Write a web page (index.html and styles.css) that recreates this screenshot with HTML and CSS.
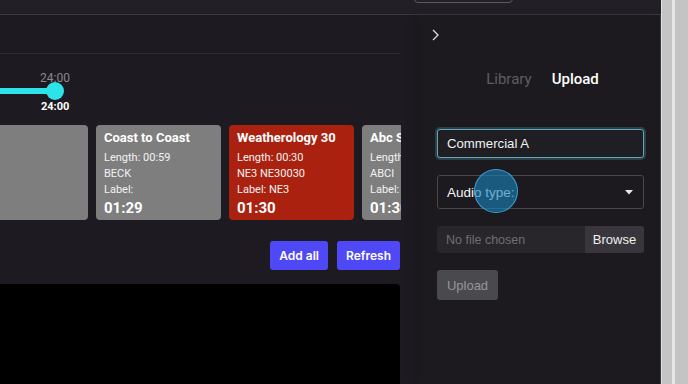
FILE: index.html
```html
<!DOCTYPE html>
<html>
<head>
<meta charset="utf-8">
<link rel="stylesheet" href="styles.css">
</head>
<body>
<div class="app">
  <div class="frame">
    <div class="topbar"><div class="top-btn"></div></div>
    <div class="row">
      <div class="main">
        <div class="content">
          <div class="header"></div>
          <div class="slider-area">
            <div class="slider">
              <span class="lbl-top">24:00</span>
              <div class="track"></div>
              <div class="knob"></div>
              <span class="lbl-bot">24:00</span>
            </div>
          </div>
          <div class="cards-view">
            <div class="cards">
              <div class="card gray"><div class="title">&nbsp;</div></div>
              <div class="card gray">
                <div class="title">Coast to Coast</div>
                <div class="line first">Length: 00:59</div>
                <div class="line">BECK</div>
                <div class="line">Label:</div>
                <div class="time">01:29</div>
              </div>
              <div class="card red">
                <div class="title">Weatherology 30</div>
                <div class="line first">Length: 00:30</div>
                <div class="line">NE3 NE30030</div>
                <div class="line">Label: NE3</div>
                <div class="time">01:30</div>
              </div>
              <div class="card gray">
                <div class="title">Abc Sports</div>
                <div class="line first">Length: 00:30</div>
                <div class="line">ABCI</div>
                <div class="line">Label:</div>
                <div class="time">01:30</div>
              </div>
            </div>
          </div>
          <div class="actions">
            <button class="btn-primary">Add all</button>
            <button class="btn-primary">Refresh</button>
          </div>
          <div class="player"></div>
        </div>
      </div>
      <div class="side">
        <div class="chev">
          <svg width="9" height="12" viewBox="0 0 9 12"><path d="M2 1 L7 6 L2 11" fill="none" stroke="#d8d8dc" stroke-width="1.4"/></svg>
        </div>
        <div class="tabs">
          <span class="tab">Library</span>
          <span class="tab active">Upload</span>
        </div>
        <div class="form">
          <div class="input">Commercial A</div>
          <div class="select">
            <span>Audio type:</span>
            <svg width="8" height="5" viewBox="0 0 8 5"><path d="M0 0 H8 L4 4.5 Z" fill="#e8e8ea"/></svg>
          </div>
          <div class="file">
            <span class="nofile">No file chosen</span>
            <span class="browse">Browse</span>
          </div>
          <button class="upload">Upload</button>
          <div class="click-dot"></div>
        </div>
      </div>
    </div>
  </div>
  <div class="scrollbar"></div>
</div>
</body>
</html>
```
FILE: styles.css
```css
* { box-sizing: border-box; }
html, body { margin: 0; padding: 0; }
body {
  width: 688px;
  height: 384px;
  overflow: hidden;
  background: #1d1b21;
  font-family: Roboto, "Liberation Sans", sans-serif;
  color: #fff;
}
.app { display: flex; height: 384px; }
.frame { width: 661px; display: flex; flex-direction: column; }
.topbar {
  height: 15px;
  background: #221f26;
  border-bottom: 1px solid #3b393f;
  display: flex;
  align-items: flex-end;
  padding: 0 0 11px 414px;
  overflow: hidden;
}
.top-btn {
  width: 99px;
  height: 20px;
  flex-shrink: 0;
  border: 1px solid #5c5a60;
  border-radius: 4px;
}
.row { display: flex; flex: 1; min-height: 0; }
.main { width: 420px; overflow: hidden; }
.content { width: 401px; display: flex; flex-direction: column; }
.header { height: 39px; border-bottom: 1px solid #2f2d33; margin-right: 1px; }
.slider-area { height: 71px; }
.slider { position: relative; width: 70px; height: 71px; }
.lbl-top {
  position: absolute; left: 40px; top: 17px;
  font-size: 12px; color: #8a898e; line-height: 14px;
}
.track {
  position: absolute; left: 0; top: 34px;
  width: 56px; height: 6px; background: #2de3ea;
}
.knob {
  position: absolute; left: 46px; top: 28px;
  width: 18px; height: 18px; border-radius: 50%; background: #2de3ea;
}
.lbl-bot {
  position: absolute; left: 41px; top: 46px;
  font-size: 11px; font-weight: 700; color: #fff; line-height: 13px;
}
.cards-view { overflow: hidden; height: 95px; }
.cards { display: flex; gap: 8px; margin-left: -37px; }
.card {
  flex: 0 0 125px;
  height: 95px;
  border-radius: 4px;
  padding: 4px 8px 2px;
  color: #fff;
  overflow: hidden;
}
.card.gray { background: #7e7e7e; }
.card.red { background: #aa220f; }
.title { font-size: 13px; font-weight: 700; line-height: 18px; white-space: nowrap; }
.line { font-size: 11px; line-height: 16px; color: #f2f2f2; white-space: nowrap; }
.line.first { margin-top: 3px; }
.time { font-size: 15px; font-weight: 700; line-height: 20px; }
.actions {
  display: flex; justify-content: flex-end; gap: 9px;
  margin-top: 21px;
}
.btn-primary {
  height: 29px;
  border: none;
  border-radius: 3px;
  background: #4f48f6;
  color: #fff;
  font-family: Inter, "Liberation Sans", sans-serif;
  font-size: 12px;
  font-weight: 600;
  padding: 0 9px;
}
.actions .btn-primary:last-child { margin-right: 1px; }
.player {
  margin-top: 14px;
  height: 100px;
  background: #000;
  border-top-right-radius: 4px;
  margin-right: 1px;
}
.side {
  width: 241px;
  background: #1c1a1f;
  box-shadow: -6px 0 8px rgba(0,0,0,0.12);
  border-right: 1px solid #3a383e;
  position: relative;
  padding: 0 16px 0 17px;
}
.chev { height: 28px; padding-top: 14px; margin-left: -6px; }
.chev svg { display: block; }
.tabs {
  display: flex; justify-content: center; gap: 20px;
  margin-top: 26px;
  padding-left: 4px;
  font-size: 15px; line-height: 20px;
}
.tab { color: #5e5d62; }
.tab.active { color: #fff; font-weight: 500; }
.form { position: relative; margin-top: 40px; }
.input {
  height: 29px;
  border: 1px solid #62a6b6;
  border-radius: 3px;
  background: #1f1e23;
  box-shadow: 0 0 0 2px rgba(70,140,160,0.35);
  padding: 0 9px;
  display: flex; align-items: center;
  font-family: "Liberation Sans", Arial, sans-serif;
  font-size: 13.2px;
  color: #f2f2f2;
}
.select {
  margin-top: 17px;
  height: 34px;
  border: 1px solid #48464c;
  border-radius: 3px;
  display: flex; align-items: center; justify-content: space-between;
  padding: 0 10px 0 9px;
  font-family: "Liberation Sans", Arial, sans-serif;
  font-size: 13.5px;
  color: #f4f4f4;
}
.file {
  margin-top: 17px;
  height: 27px;
  background: #28262b;
  border-radius: 3px;
  display: flex; align-items: stretch; justify-content: space-between;
  font-family: "Liberation Sans", Arial, sans-serif;
  font-size: 12.5px;
}
.nofile { display: flex; align-items: center; padding-left: 9px; color: #6e6d72; }
.browse {
  display: flex; align-items: center;
  width: 59px; justify-content: center;
  background: #38363c;
  border-radius: 0 3px 3px 0;
  color: #f0f0f0;
  font-size: 13px;
}
.upload {
  display: block;
  margin-top: 17px;
  width: 61px; height: 30px;
  border: none; border-radius: 3px;
  background: #4a494e;
  color: #97969b;
  font-family: "Liberation Sans", Arial, sans-serif;
  font-size: 13px;
  font-weight: 500;
}
.click-dot {
  position: absolute;
  left: 37px; top: 40px;
  width: 44px; height: 44px;
  border-radius: 50%;
  background: rgba(25,130,185,0.62);
  border: 1.5px solid rgba(60,170,220,0.9);
}
.scrollbar {
  width: 27px;
  background: linear-gradient(to right, #e2e2e2 0 1px, #c4c4c4 1px 11px, #e6e6e6 11px 14px, #c4c4c4 14px);
}
```
